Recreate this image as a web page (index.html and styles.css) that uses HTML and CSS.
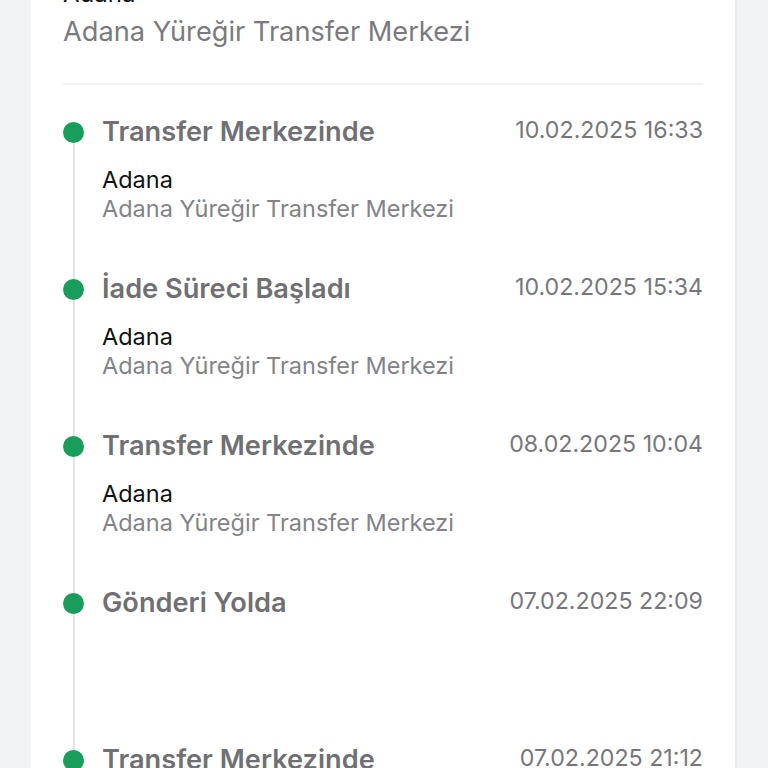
FILE: index.html
```html
<!DOCTYPE html>
<html lang="tr">
<head>
<meta charset="utf-8">
<link rel="stylesheet" href="styles.css">
</head>
<body>
<div class="card">
  <div class="origin">
    <div class="city">Adana</div>
    <div class="center">Adana Yüreğir Transfer Merkezi</div>
  </div>
  <div class="divider"></div>
  <ul class="timeline">
    <li class="item first">
      <div class="rail"><span class="dot"></span></div>
      <div class="body">
        <div class="head"><span class="title">Transfer Merkezinde</span><span class="date">10.02.2025 16:33</span></div>
        <div class="loc-city">Adana</div>
        <div class="loc-center">Adana Yüreğir Transfer Merkezi</div>
      </div>
    </li>
    <li class="item">
      <div class="rail"><span class="dot"></span></div>
      <div class="body">
        <div class="head"><span class="title">İade Süreci Başladı</span><span class="date">10.02.2025 15:34</span></div>
        <div class="loc-city">Adana</div>
        <div class="loc-center">Adana Yüreğir Transfer Merkezi</div>
      </div>
    </li>
    <li class="item">
      <div class="rail"><span class="dot"></span></div>
      <div class="body">
        <div class="head"><span class="title">Transfer Merkezinde</span><span class="date">08.02.2025 10:04</span></div>
        <div class="loc-city">Adana</div>
        <div class="loc-center">Adana Yüreğir Transfer Merkezi</div>
      </div>
    </li>
    <li class="item">
      <div class="rail"><span class="dot"></span></div>
      <div class="body">
        <div class="head"><span class="title">Gönderi Yolda</span><span class="date">07.02.2025 22:09</span></div>
      </div>
    </li>
    <li class="item">
      <div class="rail"><span class="dot"></span></div>
      <div class="body">
        <div class="head"><span class="title">Transfer Merkezinde</span><span class="date">07.02.2025 21:12</span></div>
        <div class="loc-city">Adana</div>
        <div class="loc-center">Adana Yüreğir Transfer Merkezi</div>
      </div>
    </li>
  </ul>
</div>
</body>
</html>
```
FILE: styles.css
```css
html, body {
  margin: 0;
  padding: 0;
  background: #f2f3f5;
  height: 100%;
  overflow: hidden;
}
body {
  font-family: Inter, "Noto Sans", sans-serif;
}
.card {
  margin-left: 31px;
  width: 706px;
  margin-top: -21px;
  background: #ffffff;
  border-right: 2px solid #e9eaec;
  box-sizing: border-box;
  padding: 0 32px 0 32px;
  min-height: 1200px;
}
.origin .city {
  font-size: 24px;
  line-height: 30px;
  color: #111;
}
.origin .center {
  font-size: 27.2px;
  line-height: 36px;
  color: #7a7a7e;
  margin-top: 5px;
}
.divider {
  height: 2px;
  background: #f1f1f2;
  margin-top: 33px;
}
.timeline {
  list-style: none;
  margin: 29px 0 0 0;
  padding: 0;
}
.item {
  display: grid;
  grid-template-columns: 21px 1fr;
  column-gap: 18px;
  min-height: 157px;
}
.rail {
  background: linear-gradient(#e3e3e5, #e3e3e5) center top / 2px 100% no-repeat;
}
.first .rail {
  background-position: center bottom;
  background-size: 2px calc(100% - 20px);
}
.dot {
  display: block;
  width: 21px;
  height: 21px;
  border-radius: 50%;
  background: #189d5a;
  margin-top: 8px;
}
.head {
  display: flex;
  justify-content: space-between;
  align-items: center;
  height: 34px;
}
.title {
  font-size: 27.2px;
  font-weight: 600;
  color: #707074;
}
.date {
  font-size: 23.2px;
  color: #77777b;
  margin-top: -2px;
}
.loc-city {
  margin-top: 17px;
  font-size: 23.5px;
  line-height: 29px;
  color: #111;
}
.loc-center {
  font-size: 23.5px;
  line-height: 29px;
  color: #838387;
}
```
